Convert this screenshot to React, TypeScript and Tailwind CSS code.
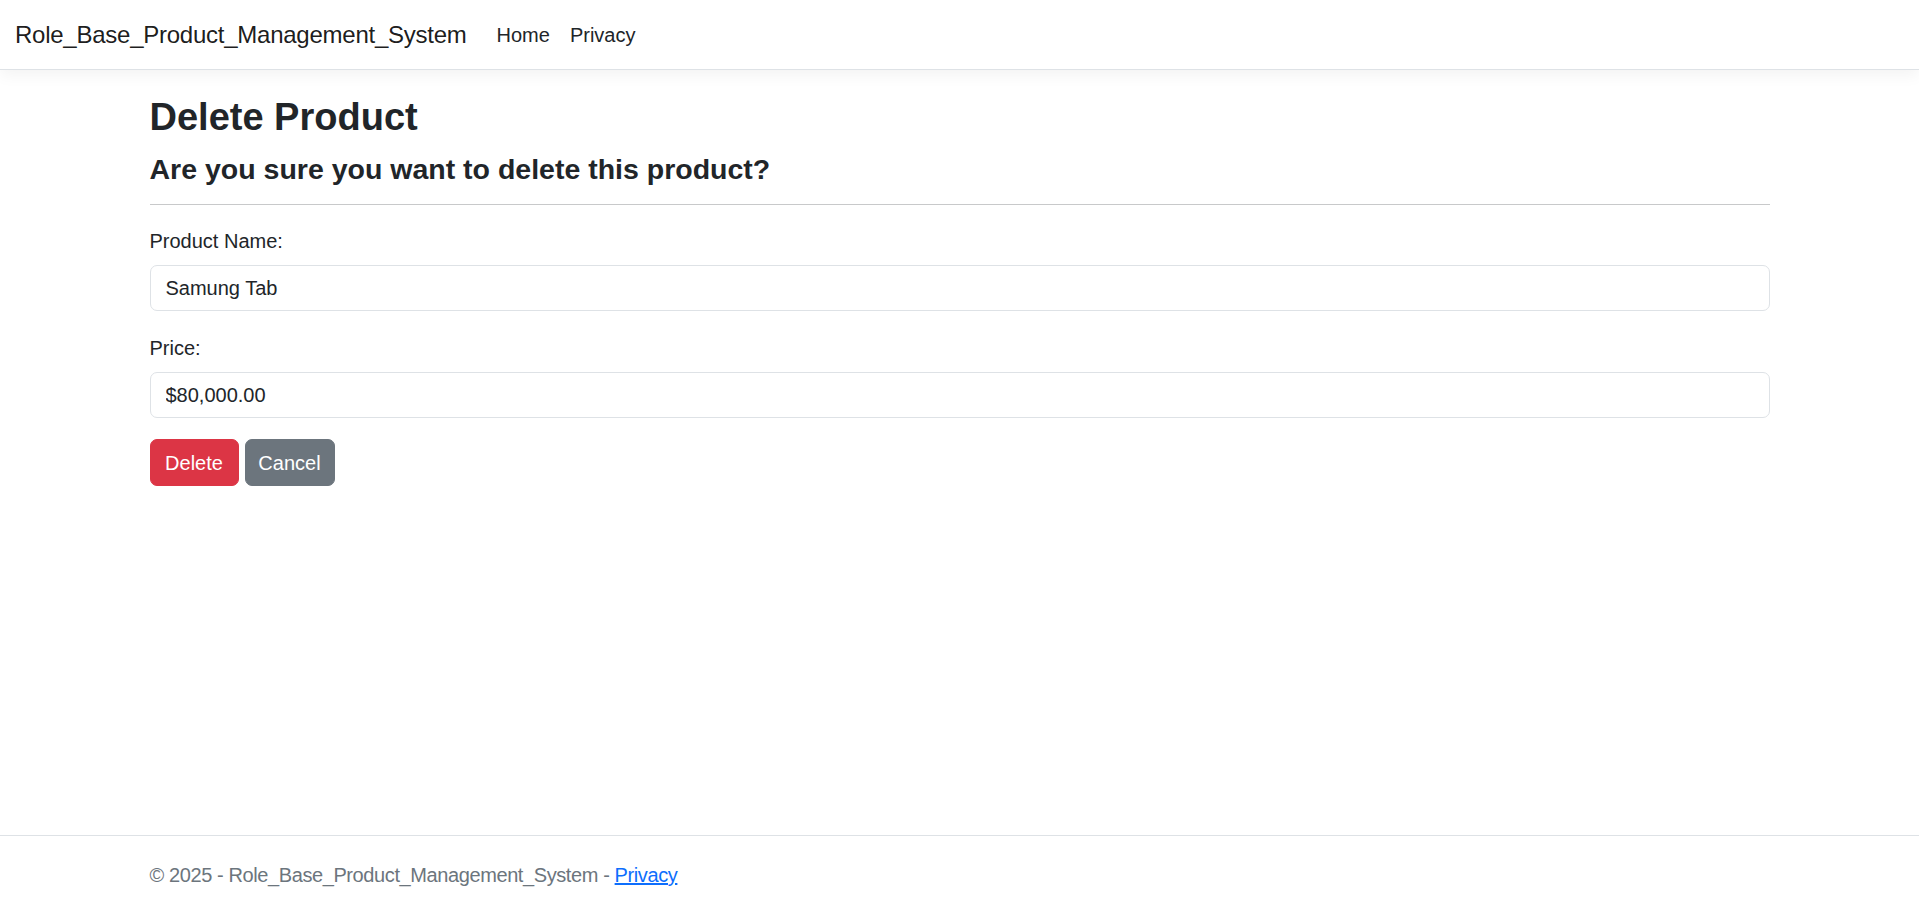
export default function App() {
  return (
    <div className="min-h-screen flex flex-col bg-white text-[#212529] font-['Segoe_UI','Liberation_Sans',Arial,sans-serif]">
      {/* Navbar */}
      <header className="h-[70px] border-b border-[#dee2e6] bg-white shadow-[0_5px_15px_rgba(0,0,0,0.05)]">
        <nav className="h-full px-[15px] flex items-center">
          <a href="#" className="text-[24px] leading-[37px] tracking-[-0.25px] text-black/90 mr-[20px]">
            Role_Base_Product_Management_System
          </a>
          <ul className="flex text-[20px] leading-[30px]">
            <li>
              <a href="#" className="px-[10px] py-[10px] text-[#212529]">Home</a>
            </li>
            <li>
              <a href="#" className="px-[10px] py-[10px] text-[#212529]">Privacy</a>
            </li>
          </ul>
        </nav>
      </header>

      {/* Main */}
      <main className="mx-auto w-full max-w-[1650px] px-[15px] pt-[23px]">
        <h2 className="text-[38px] leading-[48px] font-semibold mb-[10px]">Delete Product</h2>
        <h4 className="text-[28.5px] leading-[36px] font-semibold">Are you sure you want to delete this product?</h4>
        <hr className="mt-[17px] border-0 border-t border-[#c8c9ca]" />

        <div className="mt-[21px]">
          <label className="block text-[20px] leading-[30px] mb-[9px]">Product Name:</label>
          <input
            readOnly
            value="Samung Tab"
            className="w-full h-[46px] px-[15px] text-[20px] text-[#212529] border border-[#dee2e6] rounded-[7px] outline-none"
          />
        </div>

        <div className="mt-[22px]">
          <label className="block text-[20px] leading-[30px] mb-[9px]">Price:</label>
          <input
            readOnly
            value="$80,000.00"
            className="w-full h-[46px] px-[15px] text-[20px] text-[#212529] border border-[#dee2e6] rounded-[7px] outline-none"
          />
        </div>

        <div className="mt-[21px] flex gap-[6px]">
          <button className="h-[47px] w-[89px] text-[20px] text-white bg-[#dc3545] border border-[#dc3545] rounded-[7px]">
            Delete
          </button>
          <button className="h-[47px] w-[90px] text-[20px] text-white bg-[#6c757d] border border-[#6c757d] rounded-[7px]">
            Cancel
          </button>
        </div>
      </main>

      {/* Footer */}
      <footer className="mt-auto border-t border-[#dee2e6] text-[#6c757d] whitespace-nowrap">
        <div className="mx-auto w-full max-w-[1650px] px-[15px] pt-[6px] text-[20px] leading-[66px] tracking-[-0.4px]">
          © 2025 - Role_Base_Product_Management_System -{" "}
          <a href="#" className="text-[#0d6efd] underline">Privacy</a>
        </div>
      </footer>
    </div>
  );
}
